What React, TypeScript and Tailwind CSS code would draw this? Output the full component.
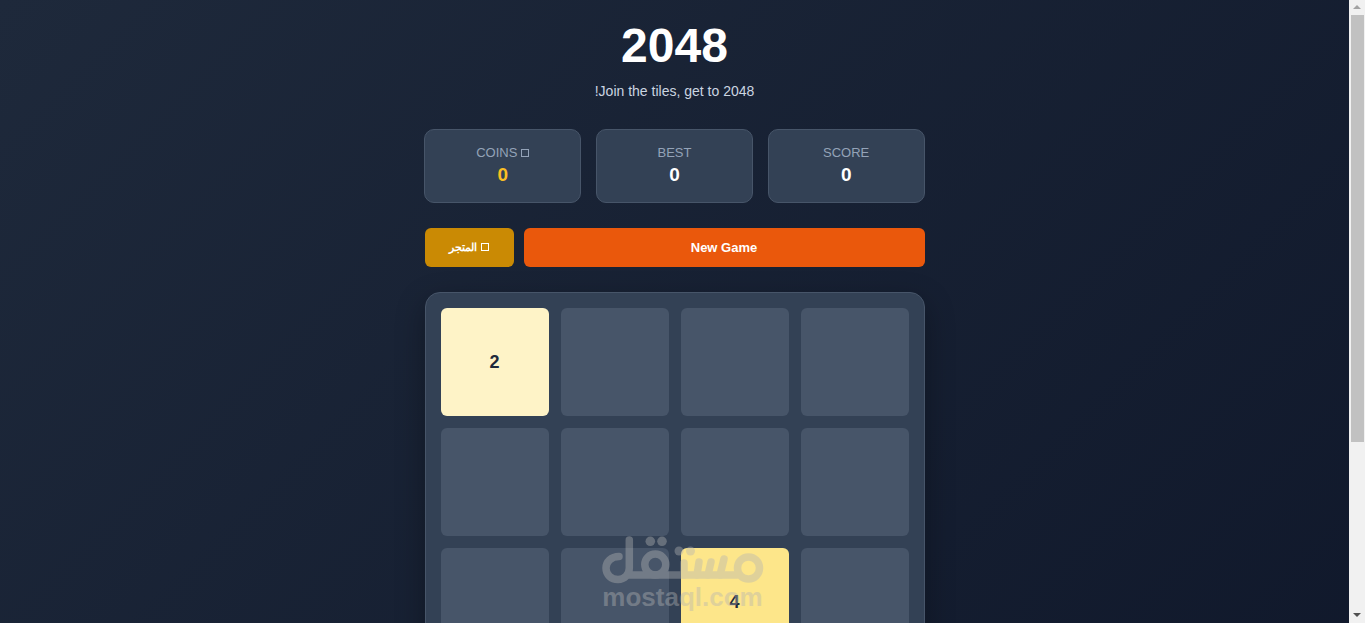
import { Fragment } from 'react'
import clsx from 'clsx'

const board = [
  [2, 0, 0, 0],
  [0, 0, 0, 0],
  [0, 0, 4, 0],
  [0, 0, 0, 0],
]

const tileColors: Record<number, string> = {
  0: 'bg-[#475569]',
  2: 'bg-[#fef3c7] text-[#1e293b]',
  4: 'bg-[#fde68a] text-[#1e293b]',
}

// Empty box shown where the emoji has no glyph
function GlyphBox({ className }: { className?: string }) {
  return <span aria-hidden="true" className={clsx('inline-block w-2 border border-current', className)} />
}

function StatCard({ label, value, coins }: { label: string; value: number; coins?: boolean }) {
  return (
    <div className="flex-1 rounded-[10px] border border-[#475569] bg-[#334155] px-4 py-[15px] text-center">
      <div className="text-[13px] leading-4 text-[#94a3b8]">
        {coins && <GlyphBox className="h-2 ml-1" />}
        {label}
      </div>
      <div className={clsx('mt-0.5 text-[19px] leading-6 font-bold', coins ? 'text-[#fbbf24]' : 'text-white')}>
        {value}
      </div>
    </div>
  )
}

function Board() {
  return (
    <div dir="ltr" className="mt-[25px] grid grid-cols-4 gap-3 rounded-[15px] border border-[#475569] bg-[#334155] p-[15px] shadow-[0_10px_30px_rgba(0,0,0,0.3)]">
      {board.map((row, y) => (
        <Fragment key={y}>
          {row.map((value, x) => (
            <div
              key={x}
              className={clsx('flex aspect-square items-center justify-center rounded-md text-[18px] font-bold', tileColors[value])}
            >
              {value || ''}
            </div>
          ))}
        </Fragment>
      ))}
    </div>
  )
}

function Watermark() {
  return (
    <div className="pointer-events-none absolute inset-x-0 bottom-3.5 flex flex-col items-center text-[#b4b4b4] opacity-40">
      <svg width="164" height="50" viewBox="0 0 164 50" fill="none" stroke="currentColor" strokeWidth="7.5" strokeLinecap="round" strokeLinejoin="round">
        <path d="M18 21.5C10 21.5 5 27 5 33C5 39.5 10 44.5 17 44.5C23.500 44.500 28.300 39.500 28.300 33V5M27 40H136" />
        <circle cx="54.300" cy="29.500" r="10.500" />
        <circle cx="147.500" cy="33" r="11" />
        <path d="M83 28V40M98 27L96 40M110 27L107 40M123 24L119 40" />
        <g fill="currentColor" stroke="none">
          <circle cx="49.300" cy="6.300" r="4.800" />
          <circle cx="61" cy="6.300" r="4.800" />
          <circle cx="78" cy="16" r="4.500" />
          <circle cx="89.500" cy="16" r="4.500" />
        </g>
      </svg>
      <span className="text-[26px] leading-6 font-bold">mostaql.com</span>
    </div>
  )
}

function Scrollbar() {
  return (
    <div aria-hidden="true" className="flex w-4 shrink-0 flex-col items-center bg-[#f1f1f1]">
      <svg className="h-[15px] w-4 shrink-0" viewBox="0 0 16 15">
        <path d="M4 9L8 5L12 9Z" fill="#a3a3a3" />
      </svg>
      <div className="min-h-0 flex-1 self-stretch pr-px pl-0.5">
        <div className="h-[72%] bg-[#c1c1c1]" />
      </div>
      <svg className="h-[15px] w-4 shrink-0" viewBox="0 0 16 15">
        <path d="M4 5L8 9L12 5Z" fill="#505050" />
      </svg>
    </div>
  )
}

export default function App() {
  return (
    <div className="relative flex h-screen overflow-hidden font-['Liberation_Sans',Arial,sans-serif]">
      <div className="min-w-0 flex-1 overflow-hidden">
        <main dir="rtl" className="bg-[linear-gradient(135deg,#1e293b_0%,#0f172a_100%)] px-5 pt-[21px] pb-[77px]">
          <div className="mx-auto max-w-[500px]">
            <header className="text-center">
              <h1 className="text-[48px] leading-[50px] font-bold text-white">2048</h1>
              <p className="mt-3 text-[14px] leading-4 text-[#cbd5e1]">Join the tiles, get to 2048!</p>
            </header>

            <section className="mt-[30px] flex gap-[15px]">
              <StatCard label="SCORE" value={0} />
              <StatCard label="BEST" value={0} />
              <StatCard label="COINS" value={0} coins />
            </section>

            <div className="mt-[25px] flex gap-[10px]">
              <button className="h-[39px] flex-1 rounded-md bg-[#ea580c] text-[13px] font-bold text-white">New Game</button>
              <button className="h-[39px] w-[89px] rounded-md bg-[#ca8a04] text-[11px] font-bold text-white">
                <GlyphBox className="h-2 ml-1" />
                المتجر
              </button>
            </div>

            <Board />
          </div>
        </main>
      </div>
      <Scrollbar />
      <Watermark />
    </div>
  )
}
